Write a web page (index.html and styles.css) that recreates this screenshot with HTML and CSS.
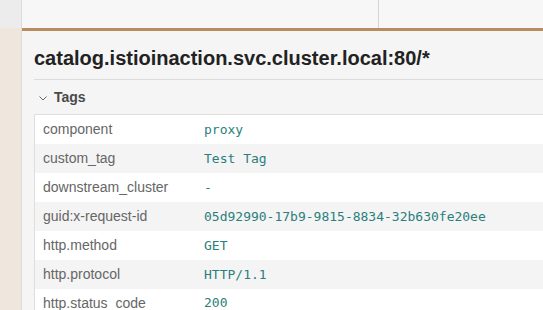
FILE: index.html
```html
<!DOCTYPE html>
<html>
<head>
<meta charset="utf-8">
<link rel="stylesheet" href="styles.css">
</head>
<body>
<div class="app">
  <aside class="side">
    <div class="side-top"></div>
    <div class="side-rest"></div>
  </aside>
  <main class="main">
    <div class="topbar">
      <div class="topbar-left"></div>
      <div class="topbar-right"></div>
    </div>
    <div class="content">
      <h1 class="title">catalog.istioinaction.svc.cluster.local:80/*</h1>
      <div class="section">
        <div class="section-head">
          <svg class="chev" width="8" height="6" viewBox="0 0 8 6"><path d="M0.5 1.5 L4 5 L7.5 1.5" fill="none" stroke="#666" stroke-width="1"/></svg>
          <span>Tags</span>
        </div>
        <table class="tags">
          <tr><td class="k">component</td><td class="v">proxy</td></tr>
          <tr><td class="k">custom_tag</td><td class="v">Test Tag</td></tr>
          <tr><td class="k">downstream_cluster</td><td class="v">-</td></tr>
          <tr><td class="k">guid:x-request-id</td><td class="v">05d92990-17b9-9815-8834-32b630fe20ee</td></tr>
          <tr><td class="k">http.method</td><td class="v">GET</td></tr>
          <tr><td class="k">http.protocol</td><td class="v">HTTP/1.1</td></tr>
          <tr><td class="k">http.status_code</td><td class="v">200</td></tr>
        </table>
      </div>
    </div>
  </main>
</div>
</body>
</html>
```

FILE: styles.css
```css
html, body {
  margin: 0;
  padding: 0;
  height: 100%;
  overflow: hidden;
  font-family: "Liberation Sans", Arial, sans-serif;
}
.app {
  display: flex;
  height: 310px;
}
.side {
  width: 21px;
  flex: none;
  border-right: 1px solid #dcdcdc;
  display: flex;
  flex-direction: column;
}
.side-top {
  height: 28px;
  background: #ececec;
}
.side-rest {
  flex: 1;
  background: #efe6dd;
}
.main {
  flex: 1;
  display: flex;
  flex-direction: column;
  background: #f5f5f5;
  min-width: 0;
}
.topbar {
  height: 28px;
  display: flex;
  background: #f7f7f7;
  border-bottom: 3px solid #b98c5f;
  flex: none;
}
.topbar-left {
  width: 356px;
  border-right: 1px solid #d6d6d6;
}
.topbar-right {
  flex: 1;
}
.content {
  padding-left: 12px;
}
.title {
  margin: 0;
  padding-top: 15px;
  padding-bottom: 9px;
  font-size: 20px;
  font-weight: bold;
  color: #222;
  line-height: 24px;
  border-bottom: 1px solid #dcdcdc;
  white-space: nowrap;
}
.section-head {
  display: flex;
  align-items: center;
  height: 34px;
  padding-left: 5px;
  font-size: 14px;
  font-weight: bold;
  color: #4a4a4a;
}
.chev {
  margin-right: 7px;
  margin-top: 1px;
}
.tags {
  border-collapse: collapse;
  width: calc(100% + 20px);
  border: 1px solid #dedede;
  border-right: none;
}
.tags tr {
  height: 29px;
}
.tags tr:nth-child(odd) {
  background: #ffffff;
}
.tags tr:nth-child(even) {
  background: #f4f4f4;
}
.tags td {
  padding: 0;
  vertical-align: middle;
}
.k {
  width: 161px;
  padding-left: 8px !important;
  font-size: 14px;
  color: #666;
}
.v {
  font-family: "DejaVu Sans Mono", monospace;
  font-size: 13px;
  color: #2a7f7c;
  padding-left: 0;
}
```
